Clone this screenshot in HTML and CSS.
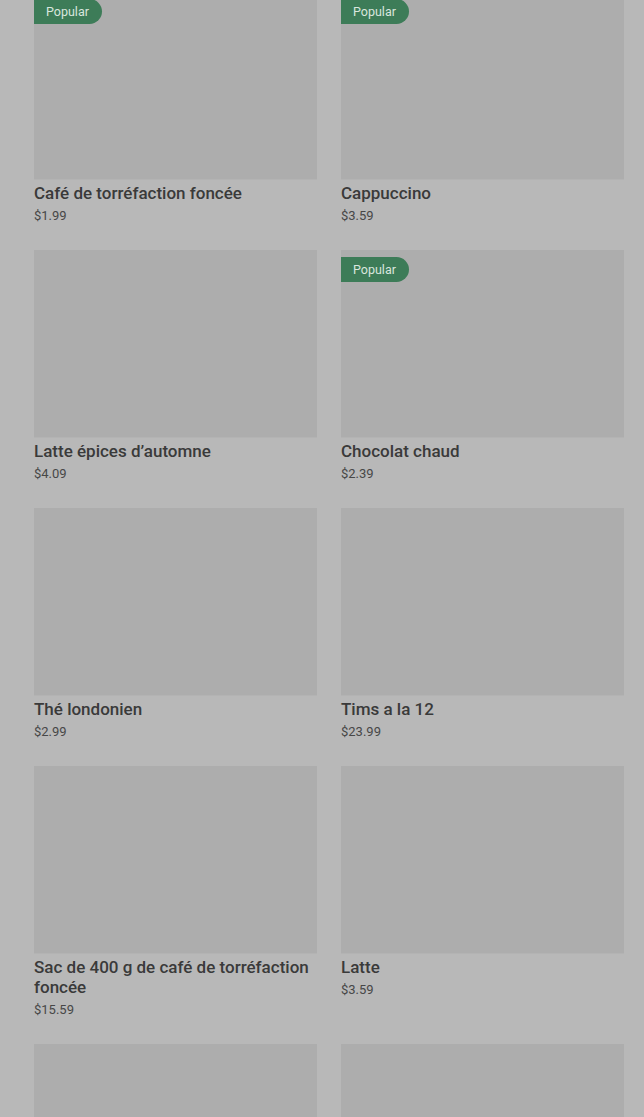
FILE: index.html
```html
<!DOCTYPE html>
<html lang="fr">
<head>
  <meta charset="UTF-8">
  <title>Menu</title>
  <link rel="stylesheet" href="styles.css">
</head>
<body>

  <div class="grid">
    <div class="card">
      <div class="thumb"><span class="badge">Popular</span></div>
      <div class="name">Café de torréfaction foncée</div>
      <div class="price">$1.99</div>
    </div>
    <div class="card">
      <div class="thumb"><span class="badge">Popular</span></div>
      <div class="name">Cappuccino</div>
      <div class="price">$3.59</div>
    </div>

    <div class="card">
      <div class="thumb"></div>
      <div class="name">Latte épices d’automne</div>
      <div class="price">$4.09</div>
    </div>
    <div class="card">
      <div class="thumb"><span class="badge">Popular</span></div>
      <div class="name">Chocolat chaud</div>
      <div class="price">$2.39</div>
    </div>

    <div class="card">
      <div class="thumb"></div>
      <div class="name">Thé londonien</div>
      <div class="price">$2.99</div>
    </div>
    <div class="card">
      <div class="thumb"></div>
      <div class="name">Tims a la 12</div>
      <div class="price">$23.99</div>
    </div>

    <div class="card">
      <div class="thumb"></div>
      <div class="name">Sac de 400 g de café de torréfaction foncée</div>
      <div class="price">$15.59</div>
    </div>
    <div class="card">
      <div class="thumb"></div>
      <div class="name">Latte</div>
      <div class="price">$3.59</div>
    </div>

    <div class="card">
      <div class="thumb"></div>
    </div>
    <div class="card">
      <div class="thumb"></div>
    </div>
  </div>

</body>
</html>
```

FILE: styles.css
```css
html, body { margin: 0; height: 100%; overflow: hidden; }
body { background: #b8b8b8; font-family: Roboto, "Liberation Sans", sans-serif; color: #3b3b3b; }

.grid {
  display: grid;
  grid-template-columns: 1fr 1fr;
  column-gap: 24px;
  row-gap: 25px;
  padding: 0 20px 0 34px;
  margin-top: -8px;
}

.card { display: flex; flex-direction: column; }

.thumb {
  position: relative;
  height: 187px;
  background: #adadad;
  border-bottom: 1px solid #b3b3b3;
}

.badge {
  position: absolute;
  top: 7px;
  left: 0;
  height: 25px;
  line-height: 25px;
  padding: 0 13px 0 12px;
  background: #3d7c58;
  color: #d9e6de;
  font-size: 12.5px;
  border-radius: 0 13px 13px 0;
}

.name {
  margin-top: 3px;
  font-size: 17px;
  font-weight: 500;
  line-height: 20px;
  color: #3a3a3a;
}

.price {
  margin-top: 4px;
  font-size: 13px;
  line-height: 18px;
  color: #474747;
}
```
